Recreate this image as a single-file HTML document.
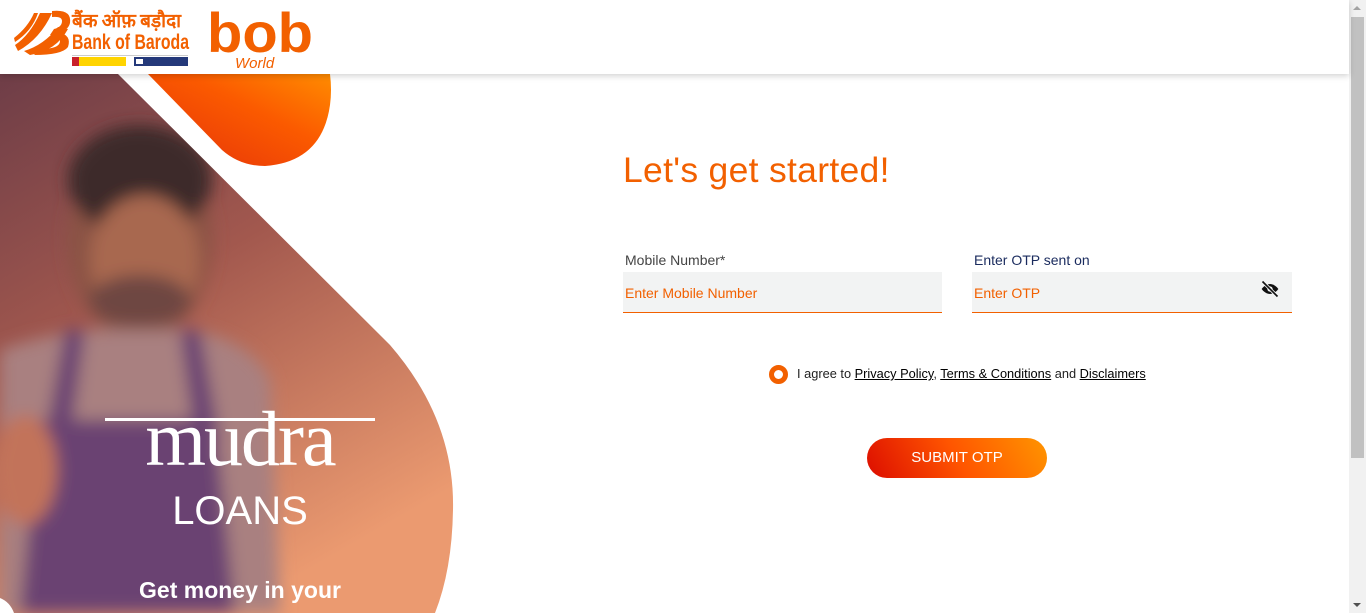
<!DOCTYPE html>
<html><head><meta charset="utf-8"><style>
*{margin:0;padding:0;box-sizing:border-box}
body{width:1366px;height:613px;overflow:hidden;background:#fff;font-family:"Liberation Sans",Arial,sans-serif;position:relative}
.hdr{position:absolute;left:0;top:0;width:1349px;height:74px;background:#fff;box-shadow:0 2px 6px rgba(0,0,0,.18);z-index:5}
.sb{position:absolute;left:1349px;top:0;width:17px;height:613px;background:#f1f1f1}
.thumb{position:absolute;left:1351px;top:17px;width:13px;height:441px;background:#c1c1c1}
.abs{position:absolute}
h1{position:absolute;left:623px;top:150px;font-size:35.5px;font-weight:normal;color:#f26000;letter-spacing:0.3px}
.lbl{position:absolute;font-size:14px;color:#444}
.inp{position:absolute;top:272px;height:41px;width:319px;background:#f2f3f3;border-bottom:1.5px solid #f26000;font-size:14px;color:#f26000;padding:13px 0 0 2px}
.agree{position:absolute;left:797px;top:366px;font-size:12.8px;color:#222}
.agree u{color:#000}
.btn{position:absolute;left:867px;top:438px;width:180px;height:40px;border-radius:20px;background:linear-gradient(60deg,#dc0d00 0%,#ff5500 50%,#ff9500 100%);color:#fff;font-size:15px;text-align:center;line-height:40px}
</style></head><body>
<div class="hdr">
<svg class="abs" style="left:10px;top:5px" width="320" height="68" viewBox="0 0 320 68">
 <g fill="#f26000">
  <path d="M5 40 Q20 30 30 8 L42 8 Q30 34 8 46Z"/>
  <path d="M4 33 Q18 22 24 8 L28 8 Q22 26 5 37Z"/>
  <path d="M14 46 Q34 40 48 22 L58 24 Q46 46 20 50Z"/>
  <path d="M42 6 Q62 4 60 18 Q58 26 48 27 Q62 30 58 42 Q52 50 24 50 L30 44 Q50 44 50 36 Q50 30 40 30 L44 24 Q52 22 52 16 Q52 11 42 12Z"/>
 </g>
 <text x="62" y="22" font-family="Noto Sans CJK SC, sans-serif" font-size="19" font-weight="bold" fill="#f26000">बैंक ऑफ़ बड़ौदा</text>
 <text x="62" y="44" font-size="21" font-weight="bold" fill="#f26000" textLength="117" lengthAdjust="spacingAndGlyphs">Bank of Baroda</text>
 <rect x="62" y="50" width="116" height="1" fill="#ccc"/>
 <rect x="62" y="52" width="54" height="9" fill="#ffd400"/><rect x="62" y="52" width="7" height="9" fill="#c8202a"/>
 <rect x="124" y="52" width="54" height="9" fill="#24397a"/><rect x="126" y="54" width="7" height="5" fill="#fff"/>
 <text x="197" y="47" font-size="56" font-weight="bold" fill="#f26000" textLength="106" lengthAdjust="spacingAndGlyphs">bob</text>
 <text x="225" y="63" font-size="15" font-style="italic" fill="#f26000">World</text>
</svg>
</div>
<svg class="abs" style="left:0;top:0" width="470" height="613" viewBox="0 0 470 613">
 <defs>
  <linearGradient id="img" x1="0" y1="0" x2="0.5" y2="1">
   <stop offset="0" stop-color="#6e3d47"/><stop offset="0.45" stop-color="#a2584e"/><stop offset="1" stop-color="#eb9a70"/>
  </linearGradient>
  <linearGradient id="blob" x1="0" y1="1" x2="1" y2="0">
   <stop offset="0" stop-color="#e4300a"/><stop offset="0.6" stop-color="#fb5a00"/><stop offset="1" stop-color="#ff8c00"/>
  </linearGradient>
  <filter id="bl"><feGaussianBlur stdDeviation="8"/></filter>
  <clipPath id="c"><path d="M0 74 L118 74 L390 345 Q455 420 453 510 Q452 570 435 613 L0 613Z"/></clipPath>
 </defs>
 <path d="M148 74 L330 74 Q332 90 330 105 Q322 162 265 166 Q240 166 222 150Z" fill="url(#blob)"/>
 <g clip-path="url(#c)">
  <rect x="0" y="74" width="470" height="539" fill="url(#img)"/>
  <g filter="url(#bl)">
   <ellipse cx="140" cy="240" rx="72" ry="100" fill="#8a5244"/>
   <ellipse cx="140" cy="180" rx="72" ry="55" fill="#3e2a2c"/>
   <ellipse cx="145" cy="260" rx="55" ry="65" fill="#a8684f"/>
   <ellipse cx="140" cy="300" rx="50" ry="25" fill="#6e4642"/>
   <path d="M0 350 Q60 330 100 330 L190 330 Q250 340 270 380 L280 613 L0 613Z" fill="#a98080"/>
   <path d="M40 420 L215 420 L235 613 L20 613Z" fill="#6a4272"/>
   <path d="M65 330 L85 330 L70 440 L45 440Z M180 330 L200 330 L220 440 L195 440Z" fill="#6a4272"/>
   <ellipse cx="25" cy="470" rx="32" ry="55" fill="#c2735a"/>
  </g>
 </g>
 <path d="M0 598 Q10 602 14 613 L0 613Z" fill="#fff"/>
 <text x="240" y="465" text-anchor="middle" font-family="Liberation Serif,serif" font-size="78" fill="#fff" letter-spacing="-2">mudra</text>
 <rect x="105" y="418" width="270" height="3" fill="#fff"/>
 <text x="240" y="524" text-anchor="middle" font-size="40" fill="#fff">LOANS</text>
 <text x="240" y="598" text-anchor="middle" font-size="23" font-weight="bold" fill="#fff">Get money in your</text>
</svg>
<h1>Let's get started!</h1>
<div class="lbl" style="left:625px;top:252px">Mobile Number*</div>
<div class="lbl" style="left:974px;top:252px;color:#1a2b5e">Enter OTP sent on</div>
<div class="inp" style="left:623px">Enter Mobile Number</div>
<div class="inp" style="left:972px;width:320px">Enter OTP</div>
<svg class="abs" style="left:1259px;top:279px" width="22" height="20" viewBox="0 0 24 24"><path d="M12 6C6 6 2 12 2 12s4 6 10 6 10-6 10-6-4-6-10-6z" fill="#111"/><circle cx="12" cy="12" r="3.2" fill="#f2f3f3"/><path d="M3 3L21 21" stroke="#f2f3f3" stroke-width="4"/><path d="M3 3L21 21" stroke="#111" stroke-width="2"/></svg>
<div class="abs" style="left:769px;top:365px;width:19px;height:19px;border-radius:50%;border:5px solid #f26000;background:#fff"></div>
<div class="agree">I agree to <u>Privacy Policy</u>, <u>Terms &amp; Conditions</u> and <u>Disclaimers</u></div>
<div class="btn">SUBMIT OTP</div>
<div class="sb"></div><div class="thumb"></div>
<div class="abs" style="left:1353px;top:6px;width:0;height:0;border-left:4px solid transparent;border-right:4px solid transparent;border-bottom:4px solid #a3a3a3"></div>
<div class="abs" style="left:1353px;top:603px;width:0;height:0;border-left:4px solid transparent;border-right:4px solid transparent;border-top:4px solid #505050"></div>
</body></html>
